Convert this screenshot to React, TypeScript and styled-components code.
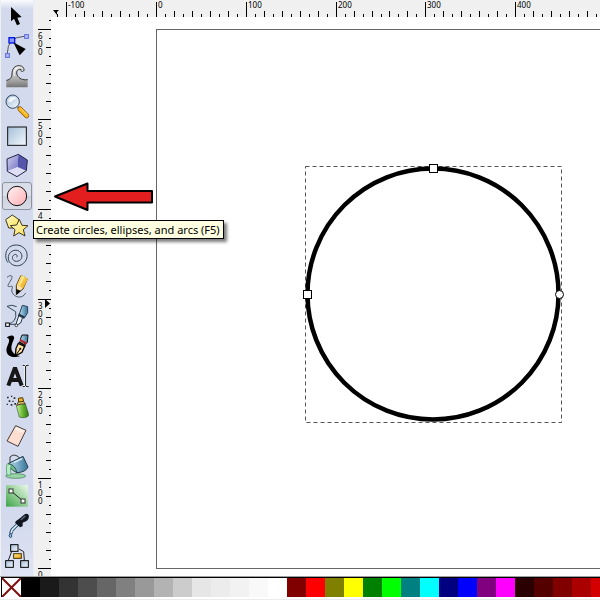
import React from "react";
import styled, { createGlobalStyle } from "styled-components";

const GlobalStyle = createGlobalStyle`
  * { box-sizing: border-box; }
  body {
    margin: 0;
    background: #fff;
    font-family: "Noto Sans", "Open Sans", sans-serif;
  }
`;

const Shell = styled.div`
  display: flex;
  flex-direction: column;
  height: 100vh;
  overflow: hidden;
`;

const Workspace = styled.div`
  flex: 1;
  min-height: 0;
  display: grid;
  grid-template-columns: 34px 17px minmax(0, 1fr);
  grid-template-rows: 17px minmax(0, 1fr);
  background: #f0f0f0;
`;

const Toolbar = styled.nav`
  position: relative;
  z-index: 2;
  grid-row: 1 / 3;
  display: flex;
  flex-direction: column;
  padding: 1px 0 0 1px;
  border-right: 1px solid #e9edf6;
  background: linear-gradient(#fafbfe 0, #d3daed 9px, #d3daed 520px, #dfe4f4 100%);
  box-shadow: inset 1px 0 #f0f0f0;
`;

const ToolButton = styled.button<{ $active?: boolean }>`
  position: relative;
  flex: none;
  display: block;
  height: 30px;
  padding: 0;
  border: 0;
  background: transparent;
  ${(p) =>
    p.$active &&
    `&::before {
      content: "";
      position: absolute;
      inset: 1px;
      border: 1px solid #8d939f;
      border-radius: 3px;
      background: linear-gradient(#d9dde8, #dde1ea 50%, #cdd2de 51%, #d8dce6);
    }`}
`;

const ToolIcon = styled.svg`
  position: relative;
  display: block;
  width: 32px;
  height: 30px;
`;

const Tooltip = styled.span`
  position: absolute;
  left: 32px;
  top: 39px;
  height: 19px;
  padding: 0 3px 0 2px;
  border: 1px solid #000;
  background: #ffffe1;
  box-shadow: 3px 3px 3px rgba(0, 0, 0, 0.5);
  color: #000;
  font-family: "Noto Sans", sans-serif;
  font-size: 11px;
  line-height: 17px;
  white-space: nowrap;
`;

const RulerArt = styled.svg<{ $span?: boolean }>`
  display: block;
  width: 100%;
  height: 100%;
  overflow: hidden;
  ${(p) => p.$span && "grid-column: 2 / 4;"}
  text {
    font-family: "Noto Sans", sans-serif;
    font-size: 8px;
    fill: #000;
  }
`;

const Canvas = styled.svg`
  display: block;
  width: 100%;
  height: 100%;
  background: #fff;
`;

const Palette = styled.div`
  flex: none;
  display: flex;
  height: 24px;
  padding: 0 0 3px 1px;
  border-top: 1px solid #a0a0a0;
  background: linear-gradient(#fff 22px, #ececec 22px);
`;

const SwatchStrip = styled.div`
  flex: 1;
  display: flex;
  overflow: hidden;
  border-top: 1px solid #000;
  border-left: 1px solid #000;
`;

const Swatch = styled.button<{ $color: string }>`
  flex: none;
  width: 19px;
  height: 19px;
  padding: 0;
  border: 0;
  background: ${(p) => p.$color};
  svg { display: block; }
`;

const range = (from: number, to: number) =>
  Array.from({ length: to - from + 1 }, (_, i) => from + i);

const UNIT = 89.8;
const tickLength = (i: number) => (i % 10 === 0 ? 15 : i % 2 === 0 ? 6 : 3);

function HorizontalRuler() {
  return (
    <RulerArt $span role="img" aria-label="Horizontal ruler">
      {range(-11, 230).map((i) => {
        const x = Math.round(122 + (i * UNIT) / 10);
        const h = tickLength(i);
        return <rect key={i} x={x} y={17 - h} width={1} height={h} />;
      })}
      {range(-1, 4).map((n) => (
        <text key={n} x={Math.round(122 + n * UNIT) + 2} y={8}>
          {n * 100}
        </text>
      ))}
      <path d="M19 10h6l-2 2v3z" />
    </RulerArt>
  );
}

function VerticalRuler() {
  return (
    <RulerArt role="img" aria-label="Vertical ruler">
      {range(-120, 61).map((i) => {
        const y = Math.round(551 - (i * UNIT) / 10);
        const w = i % 10 === 0 ? 13 : i % 2 === 0 ? 5 : 2;
        return <rect key={i} x={17 - w} y={y} width={w} height={1} />;
      })}
      {range(0, 6).map((n) =>
        String(n * 100)
          .split("")
          .map((digit, i) => (
            <text key={`${n}-${i}`} x={4} y={Math.round(551 - n * UNIT) + 10 + i * 8}>
              {digit}
            </text>
          ))
      )}
      <path d="M11 282l5 4.5-5 4.5z" />
    </RulerArt>
  );
}

function Drawing() {
  return (
    <Canvas role="img" aria-label="Drawing canvas with a selected circle">
      <g transform="translate(-51 -17)">
        <rect x={156.5} y={29.5} width={3000} height={539} fill="#fff" stroke="#666" />
        <rect
          x={305.5}
          y={166.5}
          width={256}
          height={256}
          fill="none"
          stroke="#555"
          strokeDasharray="4 3"
        />
        <circle cx={433} cy={294} r={125.5} fill="none" stroke="#000" strokeWidth={4.5} />
        <g fill="#fff" stroke="#000">
          <rect x={429.5} y={164.5} width={8} height={8} />
          <rect x={303.5} y={290.5} width={8} height={8} />
          <circle cx={559.5} cy={294.5} r={4} />
        </g>
        <path
          d="M55 196.5L87.5 183.500V191H152V202.500H87.500V210Z"
          fill="#e21e1e"
          stroke="#000"
          strokeWidth={2}
          strokeLinejoin="round"
        />
      </g>
    </Canvas>
  );
}

function Gradients() {
  return (
    <svg width={0} height={0} aria-hidden="true">
      <defs>
        <linearGradient id="blue" x1="0" y1="0" x2="1" y2="1">
          <stop offset="0" stopColor="#a3bed8" />
          <stop offset="1" stopColor="#f5f9fd" />
        </linearGradient>
        <linearGradient id="metal" x1="0" y1="0" x2="0" y2="1">
          <stop offset="0" stopColor="#eee" />
          <stop offset=".65" stopColor="#aaa" />
          <stop offset="1" stopColor="#737373" />
        </linearGradient>
        <linearGradient id="pink" x1="0" y1="0" x2="1" y2="1">
          <stop offset="0" stopColor="#fff2f3" />
          <stop offset="1" stopColor="#ffafb5" />
        </linearGradient>
        <linearGradient id="yellow" x1="0" y1="0" x2="1" y2="1">
          <stop offset="0" stopColor="#fffbd0" />
          <stop offset="1" stopColor="#ffe052" />
        </linearGradient>
        <linearGradient id="orange" x1="0" y1="0" x2="1" y2="1">
          <stop offset="0" stopColor="#fff09a" />
          <stop offset="1" stopColor="#ed9c00" />
        </linearGradient>
        <linearGradient id="steel" x1="0" y1="0" x2="1" y2="0">
          <stop offset="0" stopColor="#b9dcec" />
          <stop offset="1" stopColor="#34749b" />
        </linearGradient>
        <linearGradient id="green" x1="0" y1="0" x2="1" y2="0">
          <stop offset="0" stopColor="#d4f5aa" />
          <stop offset=".5" stopColor="#6dbb35" />
          <stop offset="1" stopColor="#347a16" />
        </linearGradient>
        <linearGradient id="fade" x1="1" y1="0" x2="0" y2="1">
          <stop offset="0" stopColor="#edf9ed" />
          <stop offset=".4" stopColor="#a8d8aa" />
          <stop offset="1" stopColor="#3da446" />
        </linearGradient>
        <linearGradient id="violet" x1="0" y1="0" x2="1" y2="1">
          <stop offset="0" stopColor="#d2d2f2" />
          <stop offset="1" stopColor="#7474c4" />
        </linearGradient>
      </defs>
    </svg>
  );
}

type Tool = { name: string; art: React.ReactNode; active?: boolean };

const tools: Tool[] = [
  {
    name: "Select",
    art: <path d="M30 18V61L39 53L48 73L57 69L49 50L62 48Z" fill="#000" />,
  },
  {
    name: "Edit nodes",
    art: (
      <>
        <path d="M19 67Q19 18 70 16" fill="none" stroke="#555" strokeWidth="3" />
        <rect x="24" y="20" width="17" height="16" fill="#8c96ff" stroke="#0018e0" strokeWidth="4" />
        <rect x="71" y="11" width="11" height="11" fill="#bcc4f3" stroke="#5261dc" strokeWidth="3" />
        <rect x="14" y="68" width="11" height="11" fill="#bcc4f3" stroke="#5261dc" strokeWidth="3" />
        <path d="M37 34L74 54L56 73Z" fill="#000" />
      </>
    ),
  },
  {
    name: "Tweak objects",
    art: (
      <>
        <path
          d="M16 79V58C28 56 33 49 33 39C33 23 42 13 55 14C64 14 70 21 69 28C66 34 58 32 60 25C48 24 44 33 49 43C54 53 65 58 80 56V79Z"
          fill="url(#metal)"
        />
        <path
          d="M16 58C28 56 33 49 33 39C33 23 42 13 55 14C64 14 70 21 69 28C66 34 58 32 60 25C48 24 44 33 49 43C54 53 65 58 80 56"
          fill="none"
          stroke="#333"
          strokeWidth="3"
        />
        <path d="M40 45Q35 26 50 20" fill="none" stroke="#fff" strokeWidth="3" />
      </>
    ),
  },
  {
    name: "Zoom",
    art: (
      <>
        <path d="M50 48L58 56" stroke="#555" strokeWidth="6" />
        <path d="M57 54L77 74" stroke="#8a5800" strokeWidth="15" strokeLinecap="round" />
        <path d="M57 54L77 74" stroke="#f9b51c" strokeWidth="11" strokeLinecap="round" />
        <path d="M59 52L78 71" stroke="#ffe486" strokeWidth="3" />
        <circle cx="35" cy="32" r="20" fill="url(#blue)" stroke="#354b62" strokeWidth="3" />
        <path d="M21 31Q23 18 37 18Q44 18 47 23Q36 24 30 34Z" fill="#fff" opacity=".8" />
      </>
    ),
  },
  {
    name: "Create rectangles and squares",
    art: <rect x="20" y="18" width="56" height="55" fill="url(#blue)" stroke="#111" strokeWidth="3" />,
  },
  {
    name: "Create 3D boxes",
    art: (
      <>
        <path d="M18 24L52 10L50 48L19 61Z" fill="url(#violet)" />
        <path d="M50 48L76 59L48 77L19 61Z" fill="#dedef6" />
        <path d="M52 10L79 27L76 59L50 48Z" fill="#5555ac" />
        <path d="M18 24L52 10L79 27L76 59L48 77L19 61Z" fill="none" stroke="#252545" strokeWidth="3" />
      </>
    ),
  },
  {
    name: "Create circles, ellipses, and arcs (F5)",
    active: true,
    art: <circle cx="48" cy="45" r="29" fill="url(#pink)" stroke="#111" strokeWidth="3" />,
  },
  {
    name: "Create stars and polygons",
    art: (
      <g stroke="#3c3820" strokeWidth="3" strokeLinejoin="round">
        <path d="M14 26L34 12L54 26L48 51H23Z" fill="url(#yellow)" />
        <path d="M55 25L63 43L81 44L67 56L72 75L54 65L38 75L42 56L28 44L47 42Z" fill="url(#yellow)" />
      </g>
    ),
  },
  {
    name: "Create spirals",
    art: (
      <path
        d="M47 49C51 44 46 38 40 41C30 46 34 61 46 61C60 61 67 48 60 36C50 21 25 27 22 47C19 68 43 80 60 72C82 61 84 34 68 20C51 6 25 11 17 29C12 42 14 56 21 65"
        fill="none"
        stroke="#334257"
        strokeWidth="3"
      />
    ),
  },
  {
    name: "Draw freehand lines",
    art: (
      <>
        <path d="M18 19C31 9 37 15 30 27C20 43 16 49 29 46C42 43 25 57 37 70C46 80 65 83 74 66" fill="none" stroke="#4c596a" strokeWidth="3" />
        <path d="M46 43L60 13L79 24L66 54L46 70Z" fill="#f9e1af" stroke="#4b3100" strokeWidth="3" />
        <path d="M48 41L61 12L81 23L67 52Z" fill="url(#orange)" />
        <path d="M55 43L68 17" stroke="#fff19a" strokeWidth="4" />
        <path d="M46 72V54L60 60Z" fill="#000" />
      </>
    ),
  },
  {
    name: "Draw Bezier curves and straight lines",
    art: (
      <>
        <path d="M49 70H18Q49 65 44 32L18 16Q32 9 47 17" fill="none" stroke="#34465b" strokeWidth="3" />
        <path d="M54 42L66 46L59 66L43 75Z" fill="#e7eef5" stroke="#263548" strokeWidth="3" />
        <path d="M55 39L64 13L80 17V35L70 51Z" fill="url(#steel)" stroke="#28435e" strokeWidth="3" />
        <path d="M52 41L70 50" stroke="#263548" strokeWidth="7" />
        <rect x="14" y="66" width="11" height="10" fill="#fff" stroke="#000" strokeWidth="3" />
        <circle cx="46" cy="73" r="4" fill="#fff" stroke="#000" strokeWidth="2" />
      </>
    ),
  },
  {
    name: "Draw calligraphic strokes",
    art: (
      <>
        <path d="M17 20C31 8 44 14 38 26C26 51 28 67 57 76C32 83 12 73 17 51C20 40 32 23 17 20Z" fill="#000" />
        <path d="M52 37L71 46L63 64L43 75L45 52Z" fill="#ffe2a0" stroke="#000" strokeWidth="4" />
        <path d="M45 72L58 53" stroke="#000" strokeWidth="3" />
        <circle cx="58" cy="53" r="3" fill="#000" />
        <path d="M58 25L63 12L81 12L79 34L73 40Z" fill="url(#steel)" stroke="#111" strokeWidth="3" />
        <path d="M57 27L77 38" stroke="#b5222a" strokeWidth="6" />
        <path d="M54 33L74 44" stroke="#111" strokeWidth="5" />
      </>
    ),
  },
  {
    name: "Create and edit text objects",
    art: (
      <>
        <path
          d="M22 74L42 20L62 74M29 57H56"
          fill="none"
          stroke="#171717"
          strokeWidth="12"
          strokeLinejoin="bevel"
        />
        <path d="M65 13H70L74 16L78 13H83M74 16V74M65 77H70L74 74L78 77H83" fill="none" stroke="#fff" strokeWidth="7" />
        <path d="M65 13H70L74 16L78 13H83M74 16V74M65 77H70L74 74L78 77H83" fill="none" stroke="#000" strokeWidth="3" />
      </>
    ),
  },
  {
    name: "Spray objects",
    art: (
      <>
        <path
          d="M18 17h5v5h-5zM30 14h4v4h-4zM38 19h5v5h-5zM23 28h5v5h-5zM34 29h4v4h-4zM17 38h4v4h-4zM29 39h5v5h-5zM40 36h5v5h-5z"
          fill="#252a30"
        />
        <path d="M46 44Q56 34 73 39L82 67V75Q73 83 55 78Z" fill="url(#green)" stroke="#31592b" strokeWidth="2" />
        <path d="M47 43L53 31H67L73 39Q60 37 47 43Z" fill="#e9c87b" stroke="#4b3d25" strokeWidth="3" />
        <path d="M52 22L65 20L68 31L53 33Z" fill="#efb51d" stroke="#493707" strokeWidth="3" />
      </>
    ),
  },
  {
    name: "Erase existing paths",
    art: (
      <>
        <path d="M44 14L75 28L51 76L18 60Z" fill="#ffded2" stroke="#453c3c" strokeWidth="3" strokeLinejoin="round" />
        <path d="M46 18L70 29L66 36L41 26Z" fill="#fff0e8" />
      </>
    ),
  },
  {
    name: "Fill bounded areas",
    art: (
      <>
        <ellipse cx="44" cy="75" rx="30" ry="7" fill="#9bd5a7" stroke="#36784e" strokeWidth="2" />
        <path d="M27 34V18Q40 5 56 21" fill="none" stroke="#333" strokeWidth="3" />
        <path d="M23 37L66 16L81 48Q74 64 47 65Z" fill="url(#steel)" stroke="#263d4e" strokeWidth="3" />
        <path d="M23 37Q19 50 47 65Q45 45 23 37Z" fill="#74bd91" stroke="#284e49" strokeWidth="3" />
        <path d="M19 38Q14 46 18 72H30Q26 52 31 43Z" fill="#b4ecc4" stroke="#438d5b" strokeWidth="2" />
        <path d="M39 34L64 23" stroke="#dff0f6" strokeWidth="4" />
      </>
    ),
  },
  {
    name: "Create and edit gradients",
    art: (
      <>
        <rect x="15" y="12" width="66" height="65" fill="url(#fade)" />
        <path d="M30 30L66 60" stroke="#222" strokeWidth="3" />
        <rect x="24" y="24" width="12" height="12" fill="#fff" stroke="#333" strokeWidth="3" />
        <rect x="60" y="54" width="12" height="12" fill="#fff" stroke="#333" strokeWidth="3" />
      </>
    ),
  },
  {
    name: "Pick colors from image",
    art: (
      <>
        <path d="M53 37L33 57L29 68" stroke="#294d72" strokeWidth="10" fill="none" />
        <path d="M54 36L34 56L30 66" stroke="#d3ecf8" strokeWidth="5" fill="none" />
        <path d="M45 30L54 24L71 10Q81 5 84 15Q84 24 77 30L65 35V46L57 49L42 35Z" fill="#101720" />
        <path d="M60 26L73 15" stroke="#637083" strokeWidth="4" />
        <path d="M28 66Q20 76 28 80Q37 78 28 66Z" fill="#8fbbe0" stroke="#284d75" strokeWidth="3" />
      </>
    ),
  },
  {
    name: "Create diagram connectors",
    art: (
      <>
        <path d="M32 31L22 58M54 24L68 32L70 58" fill="none" stroke="#222" strokeWidth="3" />
        <g fill="url(#blue)" stroke="#000" strokeWidth="3">
          <rect x="29" y="11" width="22" height="20" />
          <rect x="14" y="59" width="23" height="20" />
          <rect x="59" y="59" width="23" height="20" />
        </g>
        <rect x="38" y="38" width="23" height="14" fill="url(#orange)" stroke="#4a3500" strokeWidth="3" />
      </>
    ),
  },
];

const swatches = [
  "#000000", "#1a1a1a", "#333333", "#4d4d4d", "#666666", "#808080", "#999999",
  "#b3b3b3", "#cccccc", "#e6e6e6", "#ececec", "#f2f2f2", "#f9f9f9", "#ffffff",
  "#800000", "#ff0000", "#808000", "#ffff00", "#008000", "#00ff00", "#008080",
  "#00ffff", "#000080", "#0000ff", "#800080", "#ff00ff", "#2b0000", "#550000",
  "#800000", "#aa0000", "#d40000",
];

export default function App() {
  return (
    <Shell>
      <GlobalStyle />
      <Workspace>
        <Toolbar aria-label="Tools">
          {tools.map((tool) => (
            <ToolButton
              key={tool.name}
              type="button"
              aria-label={tool.name}
              aria-pressed={!!tool.active}
              $active={tool.active}
            >
              <ToolIcon viewBox="0 0 96 90" aria-hidden="true">
                {tool.art}
              </ToolIcon>
              {tool.active && <Tooltip role="tooltip">{tool.name}</Tooltip>}
            </ToolButton>
          ))}
          <Gradients />
        </Toolbar>
        <HorizontalRuler />
        <VerticalRuler />
        <Drawing />
      </Workspace>
      <Palette>
        <SwatchStrip aria-label="Color palette">
          <Swatch type="button" $color="#fff" aria-label="No color">
            <svg width="19" height="19" aria-hidden="true">
              <path d="M0 0L19 19M19 0L0 19" stroke="#7b1010" strokeWidth="2" />
            </svg>
          </Swatch>
          {swatches.map((color, i) => (
            <Swatch key={i} type="button" $color={color} aria-label={color} />
          ))}
        </SwatchStrip>
      </Palette>
    </Shell>
  );
}
